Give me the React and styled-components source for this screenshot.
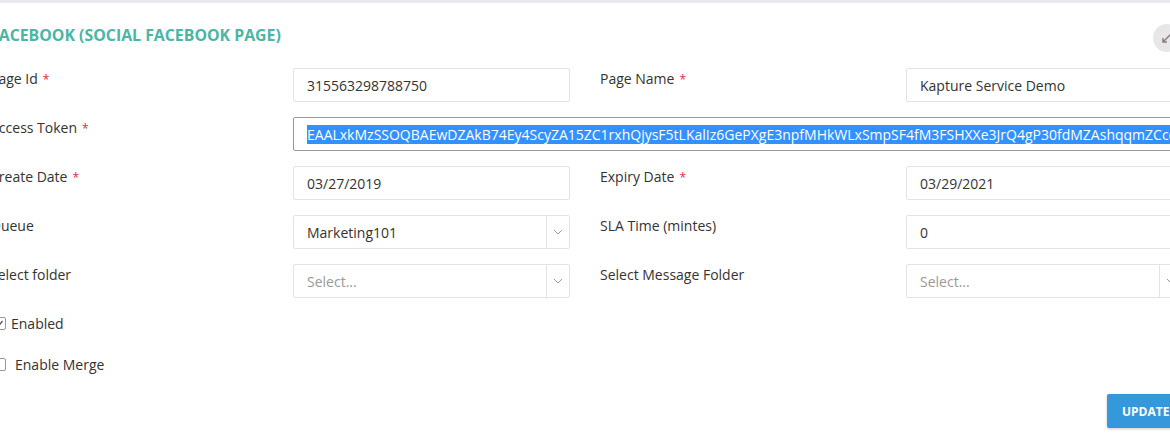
import React from 'react'
import styled, { createGlobalStyle } from 'styled-components'

const Global = createGlobalStyle`
  html, body { margin: 0; padding: 0; background: #fff; overflow: hidden; }
  body { font-family: 'Open Sans', 'Liberation Sans', sans-serif; color: #333; }
`;

const Page = styled.div`
  width: 1170px;
  height: 442px;
  border-top: 3px solid #e8eaef;
  box-sizing: border-box;
  overflow: hidden;
`;

const Panel = styled.div`
  margin-left: -10px;
  width: 1193px;
`;

const Header = styled.div`
  display: flex;
  align-items: center;
  justify-content: space-between;
  height: 30px;
  padding-top: 17px;
  margin-bottom: 18px;
`;

const Title = styled.h2`
  margin: 0;
  font-size: 15.85px;
  font-weight: 700;
  color: #4bb5a6;
`;

const Expand = styled.div`
  width: 28px;
  height: 28px;
  border-radius: 50%;
  background: #e7e7e9;
  display: flex;
  align-items: center;
  justify-content: center;
  margin-right: 2px;
  margin-top: 5px;
`;

const Form = styled.div`
  display: grid;
  grid-template-columns: 303px 277px 336px 277px;
  row-gap: 15px;
`;

const Label = styled.div`
  font-size: 14px;
  line-height: 20px;
  padding-top: 1px;
  padding-left: ${p => (p.$right ? 30 : 0)}px;
  color: #333;
`;

const Star = styled.span`
  color: #e0293b;
  font-size: 12px;
  margin-left: 5px;
`;

const Field = styled.div`
  grid-column: ${p => p.$span || 'auto'};
  height: 34px;
  box-sizing: border-box;
  border: 1px solid ${p => (p.$focus ? '#999' : '#e3e3e3')};
  border-radius: 2px;
  display: flex;
  align-items: center;
  padding-left: 13px;
  font-size: 14px;
  color: #333;
  white-space: nowrap;
  overflow: hidden;
  background: #fff;
`;

const Value = styled.span`
  flex: 1;
  color: ${p => (p.$placeholder ? '#999' : '#333')};
`;

const Selected = styled.span`
  background: #3390ff;
  color: #fff;
  line-height: 19px;
`;

const Caret = styled.div`
  width: 22px;
  height: 32px;
  border-left: 1px solid #e3e3e3;
  display: flex;
  align-items: center;
  justify-content: center;
`;

const Checks = styled.div`
  display: flex;
  flex-direction: column;
  gap: 22px;
  margin-top: 16px;
`;

const CheckRow = styled.label`
  display: flex;
  align-items: center;
  gap: ${p => p.$gap}px;
  font-size: 14px;
  color: #333;
  padding-left: 3px;
`;

const Box = styled.span`
  width: 11px;
  height: 11px;
  border: 1px solid #999;
  border-radius: 2px;
  display: flex;
  align-items: center;
  justify-content: center;
`;

const Footer = styled.div`
  display: flex;
  justify-content: flex-end;
  margin-top: 20px;
`;

const Button = styled.button`
  margin-right: -24px;
  width: 100px;
  height: 34px;
  border: none;
  border-radius: 2px;
  background: #3498db;
  color: #fff;
  font-family: 'Open Sans', 'Liberation Sans', sans-serif;
  font-weight: 700;
  font-size: 12px;
  text-align: left;
  padding-left: 15px;
  box-shadow: 0 1px 3px rgba(0,0,0,0.2);
`;

const Chevron = () => (
  <svg width="10" height="6" viewBox="0 0 10 6">
    <path d="M1 1l4 4 4-4" fill="none" stroke="#999" strokeWidth="1" />
  </svg>
);

const Req = ({ children }) => (
  <>
    {children}
    <Star>*</Star>
  </>
);

const token = 'EAALxkMzSSOQBAEwDZAkB74Ey4ScyZA15ZC1rxhQjysF5tLKalIz6GePXgE3npfMHkWLxSmpSF4fM3FSHXXe3JrQ4gP30fdMZAshqqmZCcd';

const App = () => (
  <Page>
    <Global />
    <Panel>
      <Header>
        <Title>FACEBOOK (SOCIAL FACEBOOK PAGE)</Title>
        <Expand>
          <svg width="12" height="12" viewBox="0 0 12 12">
            <path d="M11 1L6 6M2 10l4-4M2 6v4h4" fill="none" stroke="#8a7f78" strokeWidth="1.5" />
          </svg>
        </Expand>
      </Header>
      <Form>
        <Label><Req>Page Id</Req></Label>
        <Field><Value>315563298788750</Value></Field>
        <Label $right><Req>Page Name</Req></Label>
        <Field><Value>Kapture Service Demo</Value></Field>

        <Label><Req>Access Token</Req></Label>
        <Field $span="2 / 5" $focus><Selected>{token}</Selected></Field>

        <Label><Req>Create Date</Req></Label>
        <Field><Value>03/27/2019</Value></Field>
        <Label $right><Req>Expiry Date</Req></Label>
        <Field><Value>03/29/2021</Value></Field>

        <Label>Queue</Label>
        <Field><Value>Marketing101</Value><Caret><Chevron /></Caret></Field>
        <Label $right>SLA Time (mintes)</Label>
        <Field><Value>0</Value></Field>

        <Label>Select folder</Label>
        <Field><Value $placeholder>Select...</Value><Caret><Chevron /></Caret></Field>
        <Label $right>Select Message Folder</Label>
        <Field><Value $placeholder>Select...</Value><Caret><Chevron /></Caret></Field>
      </Form>
      <Checks>
        <CheckRow $gap={5}>
          <Box>
            <svg width="9" height="9" viewBox="0 0 9 9">
              <path d="M1.5 4.5l2 2.5 4-5" fill="none" stroke="#555" strokeWidth="1.3" />
            </svg>
          </Box>
          Enabled
        </CheckRow>
        <CheckRow $gap={9}>
          <Box />
          Enable Merge
        </CheckRow>
      </Checks>
      <Footer>
        <Button>UPDATE</Button>
      </Footer>
    </Panel>
  </Page>
)

export default App
